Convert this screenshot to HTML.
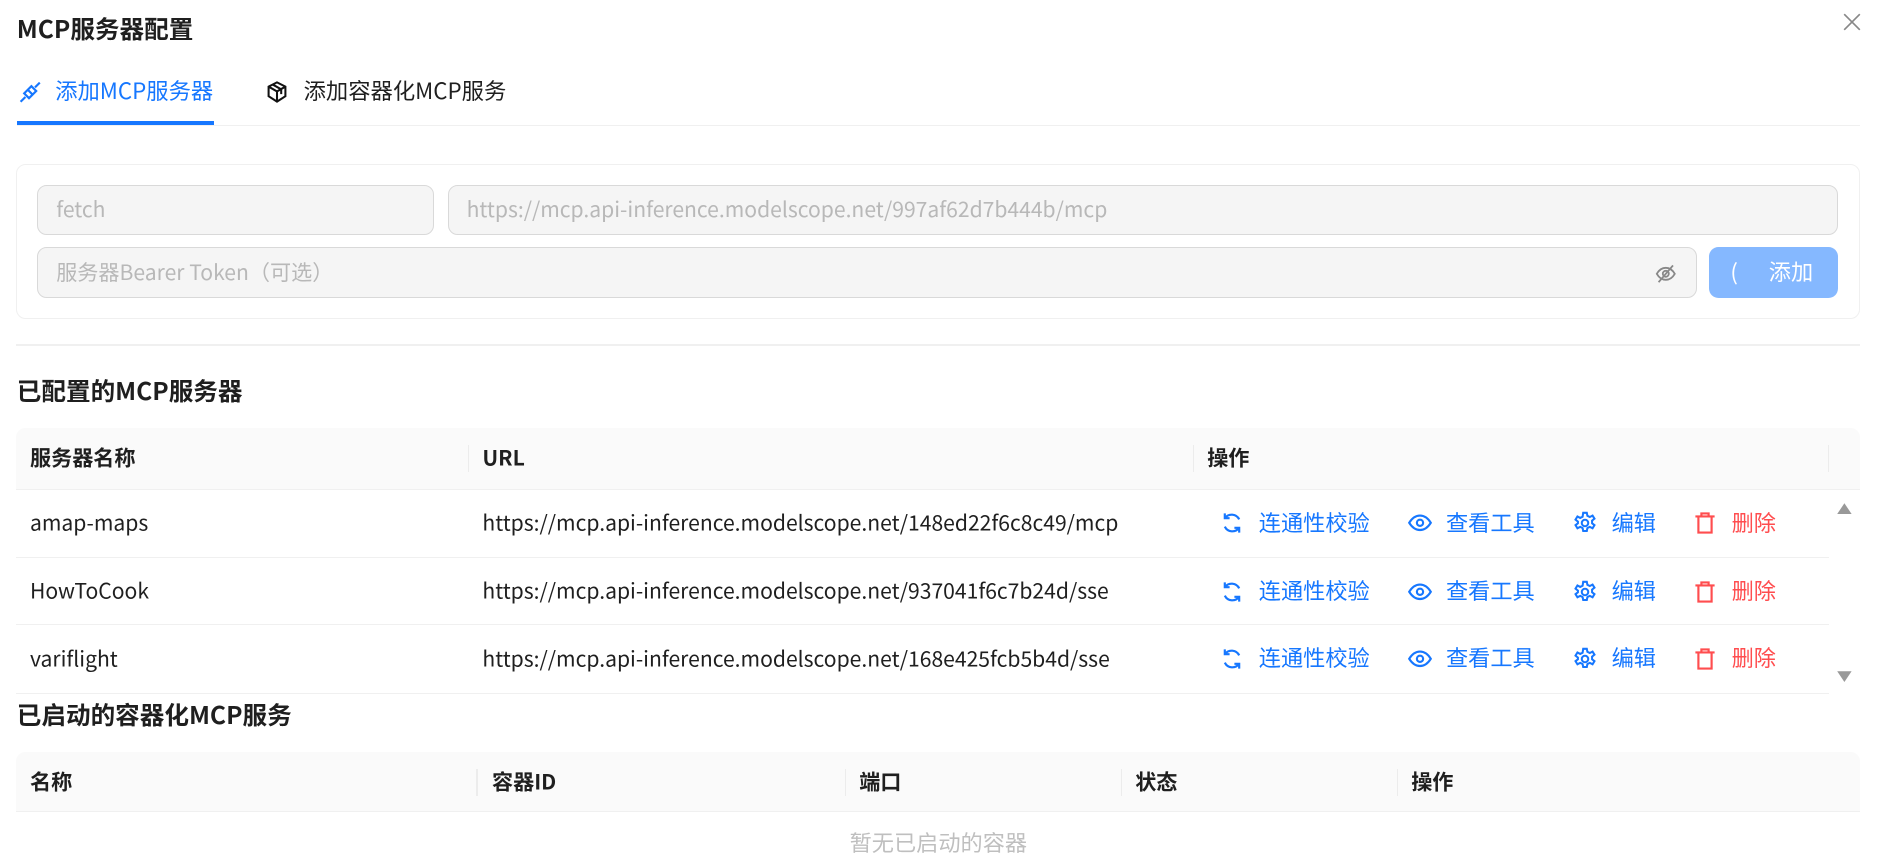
<!DOCTYPE html>
<html><head><meta charset="utf-8"><style>
*{box-sizing:border-box;margin:0;padding:0}
html,body{width:1882px;height:862px;overflow:hidden;background:#fff}
#r{zoom:1.2;width:1568px;height:718px;position:relative;font-family:"Noto Sans CJK SC","Liberation Sans",sans-serif;color:rgba(0,0,0,.88);font-size:17.6px;line-height:1.2}
.a{position:absolute;white-space:nowrap;line-height:1.2}
.b{font-weight:bold}
.inp{position:absolute;background:#f5f5f5;border:1px solid #d9d9d9;border-radius:8px;color:#b8b8b8;padding-left:15px;display:flex;align-items:center}
.hd{position:absolute;background:#fafafa;font-weight:bold}
.hd span{position:absolute;top:50%;transform:translateY(-50%);white-space:nowrap}
.sep{position:absolute;width:1px;height:22px;background:#ececec;top:14px}
.row{position:absolute;left:13px;width:1511px;height:57px;border-bottom:1px solid #f0f0f0}
.row span{position:absolute;top:50%;transform:translateY(-50%);white-space:nowrap}
.bl{color:#1677ff}.rd{color:#ff4d4f}
.ac span{font-size:18.5px}
svg{position:absolute}
</style></head><body><div id="r">
<div class="a b" style="left:14px;top:12px;font-size:20.5px">MCP服务器配置</div>
<svg style="left:1536px;top:11px" width="15" height="15" viewBox="0 0 15 15"><path d="M1 1L14 14M14 1L1 14" stroke="#888" stroke-width="1.4"/></svg>
<svg style="left:14px;top:66px" width="22" height="22" viewBox="0 0 22 22" fill="none" stroke="#1677ff" stroke-width="1.8"><path d="M3 19l4-4M9 9l-3 3 4 4 3-3zM19 3l-4 4M13 13l3-3-4-4-3 3"/></svg>
<div class="a bl" style="left:46px;top:64px;font-size:18.6px">添加MCP服务器</div>
<div class="a" style="left:14px;top:101px;width:164px;height:3px;background:#1677ff"></div>
<svg style="left:221px;top:67px" width="20" height="20" viewBox="0 0 20 20" fill="none" stroke="#111" stroke-width="1.7"><path d="M10 2l7 3.5v8L10 18l-7-4.5v-8zM3 5.5l7 4 7-4M10 9.5V18M6.5 3.8l7 4v4"/></svg>
<div class="a" style="left:253px;top:64px;font-size:18.6px">添加容器化MCP服务</div>
<div class="a" style="left:14px;top:104px;width:1536px;height:1px;background:#f0f0f0"></div>
<div class="a" style="left:13px;top:137px;width:1537px;height:129px;border:1px solid #f0f0f0;border-radius:8px"></div>
<div class="inp" style="left:31px;top:154px;width:331px;height:42px">fetch</div>
<div class="inp" style="left:373px;top:154px;width:1159px;height:42px">https://mcp.api-inference.modelscope.net/997af62d7b444b/mcp</div>
<div class="inp" style="left:31px;top:206px;width:1383px;height:42px">服务器Bearer Token（可选）</div>
<svg style="left:1379px;top:219px" width="18" height="18" viewBox="0 0 18 18" fill="none" stroke="#888" stroke-width="1.5"><path d="M1.5 9c2-3.5 4.5-5 7.5-5s5.5 1.5 7.5 5c-2 3.5-4.5 5-7.5 5s-5.5-1.5-7.5-5z"/><circle cx="9" cy="9" r="2.5"/><path d="M3 16L15 2"/></svg>
<div class="a" style="left:1424px;top:206px;width:108px;height:42px;background:#85b8ff;border-radius:8px;color:#fff;font-size:18.5px"><span style="position:absolute;left:18px;top:9px">(</span><span style="position:absolute;left:50px;top:9px">添加</span></div>
<div class="a" style="left:13px;top:287px;width:1537px;height:1px;background:#f0f0f0"></div>
<div class="a b" style="left:14px;top:313px;font-size:20.5px">已配置的MCP服务器</div>
<div class="hd" style="left:13px;top:357px;width:1537px;height:51px;border-radius:8px 8px 0 0;border-bottom:1px solid #f0f0f0">
<span style="left:12px">服务器名称</span><div class="sep" style="left:377px"></div>
<span style="left:389px">URL</span><div class="sep" style="left:981px"></div>
<span style="left:993px">操作</span><div class="sep" style="left:1510px"></div></div>
<div class="row" style="top:408px"><span style="left:12px">amap-maps</span><span style="left:389px">https://mcp.api-inference.modelscope.net/148ed22f6c8c49/mcp</span></div>
<div class="row" style="top:465px;height:56px"><span style="left:12px">HowToCook</span><span style="left:389px">https://mcp.api-inference.modelscope.net/937041f6c7b24d/sse</span></div>
<div class="row" style="top:521px"><span style="left:12px">variflight</span><span style="left:389px">https://mcp.api-inference.modelscope.net/168e425fcb5b4d/sse</span></div>
<svg style="left:1530px;top:418px" width="14" height="12"><path d="M7 1L13 10H1z" fill="#999"/></svg>
<svg style="left:1530px;top:558px" width="14" height="12"><path d="M1 1H13L7 10z" fill="#999"/></svg>
<div class="a b" style="left:14px;top:583px;font-size:20.5px">已启动的容器化MCP服务</div>
<div class="hd" style="left:13px;top:627px;width:1537px;height:50px;border-radius:8px 8px 0 0;border-bottom:1px solid #f0f0f0">
<span style="left:12px">名称</span><div class="sep" style="left:384px"></div>
<span style="left:397px">容器ID</span><div class="sep" style="left:691px"></div>
<span style="left:703px">端口</span><div class="sep" style="left:921px"></div>
<span style="left:933px">状态</span><div class="sep" style="left:1151px"></div>
<span style="left:1163px">操作</span></div>
<div class="a" style="left:708px;top:691px;color:#bfbfbf;font-size:18.5px">暂无已启动的容器</div>
<div class="ac" style="position:absolute;left:0;top:0">
<div class="a" style="top:426px;left:0"><svg style="left:1017px;top:0" width="20" height="20" viewBox="0 0 20 20" fill="none" stroke="#1677ff" stroke-width="1.8"><path d="M16 7A7 7 0 0 0 4 6M4 2v4h4M4 13a7 7 0 0 0 12 1M16 18v-4h-4"/></svg><span class="a bl" style="left:1049px;top:-2px">连通性校验</span><svg style="left:1173px;top:1px" width="20" height="18" viewBox="0 0 20 18" fill="none" stroke="#1677ff" stroke-width="1.8"><path d="M1 9c2.5-4 5.5-6 9-6s6.5 2 9 6c-2.5 4-5.5 6-9 6s-6.5-2-9-6z"/><circle cx="10" cy="9" r="2.6"/></svg><span class="a bl" style="left:1205px;top:-2px">查看工具</span><svg style="left:1311px;top:0" width="20" height="20" viewBox="0 0 20 20" fill="none" stroke="#1677ff" stroke-width="1.7"><path d="M8.5 1.5h3l.5 2.5 2 1 2.3-1.2 1.6 2.6-2 1.6v2.2l2 1.6-1.6 2.6-2.3-1.2-2 1-.5 2.5h-3l-.5-2.5-2-1-2.3 1.2-1.6-2.6 2-1.6V8.8l-2-1.6 1.6-2.6L6 5.8l2-1z"/><circle cx="10" cy="10" r="2.7"/></svg><span class="a bl" style="left:1343px;top:-2px">编辑</span><svg style="left:1411px;top:0" width="20" height="20" viewBox="0 0 20 20" fill="none" stroke="#ff4d4f" stroke-width="1.8"><path d="M2 4.5h16M7 4.5V2h6v2.5M4.5 4.5V18h11V4.5"/></svg><span class="a rd" style="left:1443px;top:-2px">删除</span></div>
</div>
<div class="ac" style="position:absolute;left:0;top:57px">
<div class="a" style="top:426px;left:0"><svg style="left:1017px;top:0" width="20" height="20" viewBox="0 0 20 20" fill="none" stroke="#1677ff" stroke-width="1.8"><path d="M16 7A7 7 0 0 0 4 6M4 2v4h4M4 13a7 7 0 0 0 12 1M16 18v-4h-4"/></svg><span class="a bl" style="left:1049px;top:-2px">连通性校验</span><svg style="left:1173px;top:1px" width="20" height="18" viewBox="0 0 20 18" fill="none" stroke="#1677ff" stroke-width="1.8"><path d="M1 9c2.5-4 5.5-6 9-6s6.5 2 9 6c-2.5 4-5.5 6-9 6s-6.5-2-9-6z"/><circle cx="10" cy="9" r="2.6"/></svg><span class="a bl" style="left:1205px;top:-2px">查看工具</span><svg style="left:1311px;top:0" width="20" height="20" viewBox="0 0 20 20" fill="none" stroke="#1677ff" stroke-width="1.7"><path d="M8.5 1.5h3l.5 2.5 2 1 2.3-1.2 1.6 2.6-2 1.6v2.2l2 1.6-1.6 2.6-2.3-1.2-2 1-.5 2.5h-3l-.5-2.5-2-1-2.3 1.2-1.6-2.6 2-1.6V8.8l-2-1.6 1.6-2.6L6 5.8l2-1z"/><circle cx="10" cy="10" r="2.7"/></svg><span class="a bl" style="left:1343px;top:-2px">编辑</span><svg style="left:1411px;top:0" width="20" height="20" viewBox="0 0 20 20" fill="none" stroke="#ff4d4f" stroke-width="1.8"><path d="M2 4.5h16M7 4.5V2h6v2.5M4.5 4.5V18h11V4.5"/></svg><span class="a rd" style="left:1443px;top:-2px">删除</span></div>
</div>
<div class="ac" style="position:absolute;left:0;top:113px">
<div class="a" style="top:426px;left:0"><svg style="left:1017px;top:0" width="20" height="20" viewBox="0 0 20 20" fill="none" stroke="#1677ff" stroke-width="1.8"><path d="M16 7A7 7 0 0 0 4 6M4 2v4h4M4 13a7 7 0 0 0 12 1M16 18v-4h-4"/></svg><span class="a bl" style="left:1049px;top:-2px">连通性校验</span><svg style="left:1173px;top:1px" width="20" height="18" viewBox="0 0 20 18" fill="none" stroke="#1677ff" stroke-width="1.8"><path d="M1 9c2.5-4 5.5-6 9-6s6.5 2 9 6c-2.5 4-5.5 6-9 6s-6.5-2-9-6z"/><circle cx="10" cy="9" r="2.6"/></svg><span class="a bl" style="left:1205px;top:-2px">查看工具</span><svg style="left:1311px;top:0" width="20" height="20" viewBox="0 0 20 20" fill="none" stroke="#1677ff" stroke-width="1.7"><path d="M8.5 1.5h3l.5 2.5 2 1 2.3-1.2 1.6 2.6-2 1.6v2.2l2 1.6-1.6 2.6-2.3-1.2-2 1-.5 2.5h-3l-.5-2.5-2-1-2.3 1.2-1.6-2.6 2-1.6V8.8l-2-1.6 1.6-2.6L6 5.8l2-1z"/><circle cx="10" cy="10" r="2.7"/></svg><span class="a bl" style="left:1343px;top:-2px">编辑</span><svg style="left:1411px;top:0" width="20" height="20" viewBox="0 0 20 20" fill="none" stroke="#ff4d4f" stroke-width="1.8"><path d="M2 4.5h16M7 4.5V2h6v2.5M4.5 4.5V18h11V4.5"/></svg><span class="a rd" style="left:1443px;top:-2px">删除</span></div>
</div>
</div></body></html>
